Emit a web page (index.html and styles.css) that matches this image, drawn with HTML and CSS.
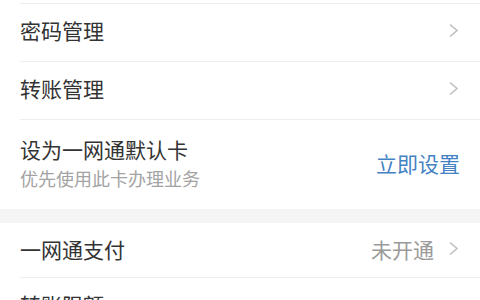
FILE: index.html
```html
<!DOCTYPE html>
<html>
<head>
  <meta charset="utf-8">
  <title>银行卡设置</title>
  <link rel="stylesheet" href="styles.css">
</head>
<body>
  <div class="group">
    <div class="row"><div class="cell prev"></div></div>
    <div class="row">
      <div class="cell">
        <span class="title">密码管理</span>
        <svg class="arrow" width="11" height="15" viewBox="0 0 11 15"><polyline points="2,1.5 9,7.5 2,13.5" fill="none" stroke="#bfbfbf" stroke-width="1.6"/></svg>
      </div>
    </div>
    <div class="row">
      <div class="cell">
        <span class="title">转账管理</span>
        <svg class="arrow" width="11" height="15" viewBox="0 0 11 15"><polyline points="2,1.5 9,7.5 2,13.5" fill="none" stroke="#bfbfbf" stroke-width="1.6"/></svg>
      </div>
    </div>
    <div class="row">
      <div class="cell tall last">
        <div class="text">
          <div class="title">设为一网通默认卡</div>
          <div class="sub">优先使用此卡办理业务</div>
        </div>
        <span class="link">立即设置</span>
      </div>
    </div>
  </div>

  <div class="band"></div>

  <div class="group">
    <div class="row">
      <div class="cell short">
        <span class="title">一网通支付</span>
        <span class="value">未开通</span>
        <svg class="arrow" width="11" height="15" viewBox="0 0 11 15"><polyline points="2,1.5 9,7.5 2,13.5" fill="none" stroke="#bfbfbf" stroke-width="1.6"/></svg>
      </div>
    </div>
    <div class="row">
      <div class="cell">
        <span class="title">转账限额</span>
      </div>
    </div>
  </div>
</body>
</html>
```

FILE: styles.css
```css
* {
  margin: 0;
  padding: 0;
  box-sizing: border-box;
}

html, body {
  width: 100%;
  height: 100%;
  background-color: #ffffff;
  font-family: "Noto Sans CJK SC", "Noto Sans", sans-serif;
  overflow: hidden;
}

/* Список */

.group {
  background-color: #ffffff;
}

.row {
  padding-left: 20px;
}

.cell {
  height: 58px;
  display: flex;
  align-items: center;
  padding-right: 21px;
  padding-bottom: 5px;
  border-bottom: 1px solid #efefef;
}

.cell.prev {
  height: 4px;
  padding-bottom: 0;
}

.cell.tall {
  height: 89px;
  padding-right: 20px;
  padding-bottom: 4px;
}

.cell.short {
  height: 55px;
  padding-bottom: 3px;
}

.cell.last {
  border-bottom: none;
}

.text {
  flex: 1;
}

.title {
  flex: 1;
  font-size: 21px;
  line-height: 28px;
  color: #333333;
}

.sub {
  font-size: 18px;
  line-height: 26px;
  margin-top: 2px;
  color: #a3a3a3;
}

.link {
  font-size: 21px;
  color: #4382c4;
}

.value {
  font-size: 21px;
  color: #9a9a9a;
  margin-right: 14px;
}

.arrow {
  display: block;
}

/* Разделитель */

.band {
  height: 14px;
  background-color: #f5f5f5;
}
```
